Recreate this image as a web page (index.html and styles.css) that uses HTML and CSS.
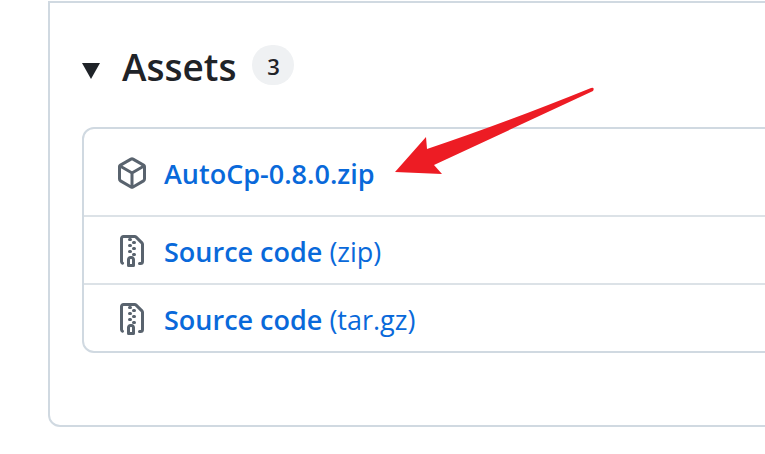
FILE: index.html
```
<!DOCTYPE html>
<html lang="en">
<head>
  <meta charset="UTF-8" />
  <meta name="viewport" content="width=device-width, initial-scale=1.0"/>
  <title>Release assets</title>
  <link rel="stylesheet" href="styles.css">
</head>
<body>
<!-- icons shared by the rows -->
<svg width="0" height="0" class="sprite" aria-hidden="true">
  <symbol id="icon-package" viewBox="0 0 16 16">
    <path d="m8.878.392 5.25 3.045c.54.314.872.89.872 1.514v6.098a1.75 1.75 0 0 1-.872 1.514l-5.25 3.045a1.75 1.75 0 0 1-1.756 0l-5.25-3.045A1.75 1.75 0 0 1 1 11.049V4.951c0-.624.332-1.201.872-1.514L7.122.392a1.75 1.75 0 0 1 1.756 0ZM7.875 1.69l-4.63 2.685L8 7.133l4.755-2.758-4.63-2.685a.248.248 0 0 0-.25 0ZM2.5 5.677v5.372c0 .09.047.171.125.216l4.625 2.683V8.432Zm6.25 8.271 4.625-2.683a.25.25 0 0 0 .125-.216V5.677L8.75 8.432Z"/>
  </symbol>
  <symbol id="icon-zip" viewBox="0 0 16 16">
    <path d="M3.5 1.75v11.5c0 .09.048.173.126.217a.75.75 0 0 1-.752 1.298A1.748 1.748 0 0 1 2 13.25V1.75C2 .784 2.784 0 3.75 0h5.586c.464 0 .909.185 1.237.513l2.914 2.914c.329.328.513.773.513 1.237v8.586A1.75 1.75 0 0 1 12.25 15h-.5a.75.75 0 0 1 0-1.5h.5a.25.25 0 0 0 .25-.25V4.664a.25.25 0 0 0-.073-.177L9.513 1.573a.25.25 0 0 0-.177-.073H7.25a.75.75 0 0 1 0 1.5h-.5a.75.75 0 0 1 0-1.5h-3a.25.25 0 0 0-.25.25Zm3.75 8.75h.5c.966 0 1.75.784 1.75 1.75v3a.75.75 0 0 1-.75.75h-2.5a.75.75 0 0 1-.75-.75v-3c0-.966.784-1.75 1.75-1.75ZM6 5.25a.75.75 0 0 1 .75-.75h.5a.75.75 0 0 1 0 1.5h-.5A.75.75 0 0 1 6 5.25Zm.75 2.25h.5a.75.75 0 0 1 0 1.5h-.5a.75.75 0 0 1 0-1.5ZM8 6.75A.75.75 0 0 1 8.75 6h.5a.75.75 0 0 1 0 1.5h-.5A.75.75 0 0 1 8 6.75ZM8.75 3h.5a.75.75 0 0 1 0 1.5h-.5a.75.75 0 0 1 0-1.5ZM8 9.75A.75.75 0 0 1 8.75 9h.5a.75.75 0 0 1 0 1.5h-.5A.75.75 0 0 1 8 9.75Zm-1 2.5v2.25h1v-2.25a.25.25 0 0 0-.25-.25h-.5a.25.25 0 0 0-.25.25Z"/>
  </symbol>
</svg>

<div class="release">
  <details class="assets" open>
    <summary>
      <svg class="caret" viewBox="0 0 18 16" aria-hidden="true"><path d="M0 0h18L9 16z"/></svg>
      <h3>Assets</h3>
      <span class="counter">3</span>
    </summary>

    <ul class="asset-list">
      <li class="main-asset">
        <svg class="icon" aria-hidden="true"><use href="#icon-package"/></svg>
        <a href="#"><b>AutoCp-0.8.0.zip</b></a>
        <svg class="arrow" viewBox="0 0 200 88" aria-hidden="true">
          <path d="M1 85 32 50 33 62Q108 37 197 1 201 0 199 4 L40 78 48 87Z"/>
        </svg>
      </li>
      <li>
        <svg class="icon" aria-hidden="true"><use href="#icon-zip"/></svg>
        <a href="#"><b>Source code</b> (zip)</a>
      </li>
      <li>
        <svg class="icon" aria-hidden="true"><use href="#icon-zip"/></svg>
        <a href="#"><b>Source code</b> (tar.gz)</a>
      </li>
    </ul>
  </details>
</div>
</body>
</html>
```
FILE: styles.css
```
* { box-sizing: border-box; }
body {
  margin: 0;
  padding: 1px 0 27px 48px;
  font-family: "Segoe UI", "Open Sans", "Noto Sans", sans-serif;
  font-size: 27px;
  line-height: 34px;
  background-color: #fff;
  color: #1f2328;
  overflow-x: hidden;
}
.sprite {
  position: absolute;
}
/* the cards run on past the right edge of the window */
.release {
  margin-right: -20px;
  border: 2px solid #d0d9e1;
  border-radius: 0 0 12px 12px;
  padding: 42px 0 72px 32px;
}
.assets summary {
  display: flex;
  align-items: center;
  list-style: none;
  cursor: pointer;
}
.caret {
  width: 18px;
  height: 16px;
  margin: 12px 22px 0 0;
  fill: #1f2328;
}
.assets h3 {
  margin: 0 16px 0 0;
  font-size: 37px;
  line-height: 44px;
  height: 40px;
  font-weight: 600;
}
.counter {
  min-width: 42px;
  height: 40px;
  border-radius: 20px;
  background-color: #eff1f3;
  font-size: 22px;
  line-height: 42px;
  font-weight: 600;
  text-align: center;
}
.asset-list {
  list-style: none;
  margin: 42px 0 0;
  padding: 0;
  border: 2px solid #d0d9e1;
  border-radius: 12px;
}
.asset-list li {
  display: flex;
  align-items: center;
  gap: 16px;
  padding: 16px 32px 14px;
}
.asset-list li + li {
  border-top: 2px solid #dce2e7;
}
.asset-list .main-asset {
  position: relative;
  padding: 26px 32px 24px;
}
.icon {
  width: 32px;
  height: 32px;
  fill: #59636e;
}
.asset-list a {
  padding-top: 2px;
  color: #0969da;
  text-decoration: none;
}
.asset-list a:hover {
  text-decoration: underline;
}
.asset-list b {
  font-weight: 600;
}
/* red arrow pointing at the file to download */
.arrow {
  position: absolute;
  left: 310px;
  top: -42px;
  width: 200px;
  height: 88px;
  fill: #ed1c24;
}
```
